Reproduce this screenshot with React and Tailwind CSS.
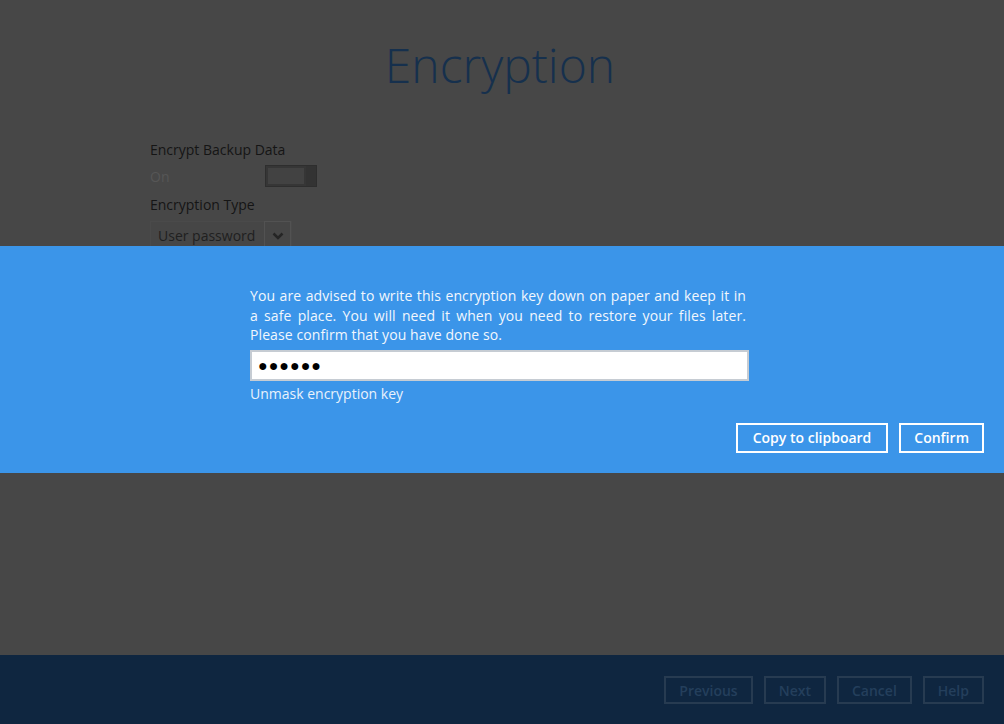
import React from "react";

export default function App() {
  const font = { fontFamily: '"Open Sans", "Noto Sans", sans-serif' };
  return (
    <div className="w-[1004px] h-[724px] bg-[#474747] flex flex-col overflow-hidden" style={font}>
      <div className="h-[246px] overflow-hidden">
        <h1 className="pt-[35px] text-center text-[48px] leading-[60px] font-light text-[#16304d] pr-[4px]">
          Encryption
        </h1>
        <div className="pl-[150px] mt-[45px] text-[14px] text-[#151515]">
          <div className="leading-[20px]">Encrypt Backup Data</div>
          <div className="flex items-center h-[32px]">
            <span className="w-[115px] text-[#565656]">On</span>
            <div className="w-[52px] h-[22px] border border-[#2e2e2e] bg-[#363636] flex">
              <div className="flex-1 bg-[#424242] m-[2px]" />
              <div className="w-[10px] bg-[#333]" />
            </div>
          </div>
          <div className="leading-[20px] mt-[3px]">Encryption Type</div>
          <div className="mt-[6px] w-[142px] h-[28px] border border-[#4a4a4a] bg-[#464646] flex items-center justify-between pl-[7px] text-[#202020]">
            <span>User password</span>
            <div className="w-[27px] h-[28px] border border-[#525252] flex items-center justify-center">
              <svg width="12" height="9" viewBox="0 0 12 9">
                <path d="M1.5 2.5 L6 7 L10.5 2.5" fill="none" stroke="#252525" strokeWidth="2.5" />
              </svg>
            </div>
          </div>
        </div>
      </div>

      <div className="h-[227px] bg-[#3b95e9] flex flex-col">
        <div className="pl-[250px] pt-[40px]">
          <p className="w-[496px] text-[14px] leading-[19.5px] tracking-[0.1px] text-[#f2f7fd] text-justify">
            You are advised to write this encryption key down on paper and keep it in a safe place. You will need it when you need to restore your files later. Please confirm that you have done so.
          </p>
          <div className="mt-[5px] w-[499px] h-[31px] bg-white border-2 border-[#c6ccd3] flex items-center pl-[6px] text-[16px] text-black tracking-[1px]">
            ●●●●●●
          </div>
          <div className="mt-[3px] text-[14px] leading-[20px] text-[#e9f2fc]">Unmask encryption key</div>
        </div>
        <div className="flex justify-end gap-[11px] pr-[20px] mt-[19px]">
          <button className="h-[30px] px-[15px] border-2 border-white text-white text-[14px] font-semibold">
            Copy to clipboard
          </button>
          <button className="h-[30px] px-[13px] border-2 border-white text-white text-[14px] font-semibold">
            Confirm
          </button>
        </div>
      </div>

      <div className="h-[182px]" />

      <div className="flex-1 bg-[#0f2640] flex justify-end items-start pt-[21px] pr-[20px] gap-[11px]">
        {["Previous", "Next", "Cancel", "Help"].map((t) => (
          <button
            key={t}
            className="h-[28px] px-[13px] border-2 border-[#273b51] text-[#243f5c] text-[14px] font-semibold"
          >
            {t}
          </button>
        ))}
      </div>
    </div>
  );
}
